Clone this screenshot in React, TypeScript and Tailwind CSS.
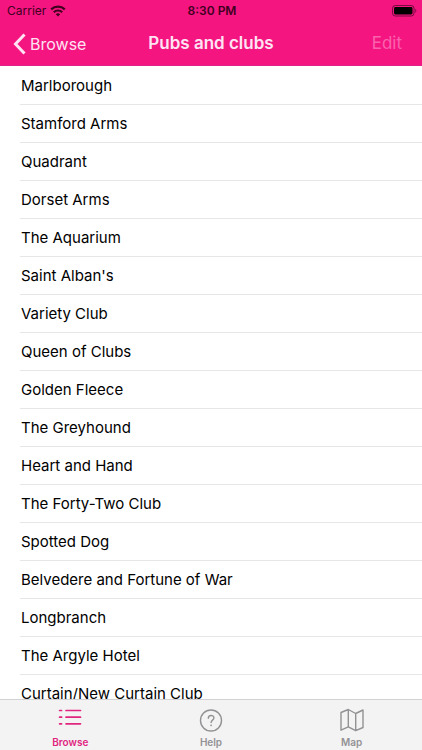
import React, { useState } from 'react';

const VENUES = [
  'Marlborough',
  'Stamford Arms',
  'Quadrant',
  'Dorset Arms',
  'The Aquarium',
  "Saint Alban's",
  'Variety Club',
  'Queen of Clubs',
  'Golden Fleece',
  'The Greyhound',
  'Heart and Hand',
  'The Forty-Two Club',
  'Spotted Dog',
  'Belvedere and Fortune of War',
  'Longbranch',
  'The Argyle Hotel',
  'Curtain/New Curtain Club',
];

const WifiIcon = () => (
  <svg viewBox="0 0 16 12" className="w-4 h-3" fill="none" stroke="currentColor" strokeWidth="2.2" aria-hidden="true">
    <path d="M1.200 4.400a9.800 9.800 0 0 1 13.600 0" />
    <path d="M3.800 7.200a6 6 0 0 1 8.400 0" />
    <path d="M8 11.600 5.800 9.300a3.200 3.200 0 0 1 4.400 0z" fill="currentColor" stroke="none" />
  </svg>
);

const BatteryIcon = () => (
  <svg viewBox="0 0 25 12" className="w-[25px] h-3" aria-hidden="true">
    <rect x="0.5" y="0.5" width="21.5" height="10.5" rx="2.8" fill="none" stroke="#000" strokeOpacity="0.5" />
    <rect x="2" y="2" width="18.5" height="7.5" rx="1.4" fill="#000" />
    <path d="M23.3 3.8v4c1.4-.5 1.4-3.500 0-4z" fill="#000" fillOpacity="0.5" />
  </svg>
);

const ListIcon = () => (
  <svg viewBox="0 0 24 24" className="w-6 h-6" fill="none" stroke="currentColor" strokeWidth="1.7" strokeLinecap="round" aria-hidden="true">
    <path d="M1.600 2.500h2M8 2.500h14.500M1.600 9.200h2M8 9.200h14.500M1.600 15.800h2M8 15.800h14.500" />
  </svg>
);

const HelpIcon = () => (
  <svg viewBox="0 0 24 24" className="w-6 h-6" fill="none" stroke="currentColor" strokeWidth="1.4" strokeLinecap="round" aria-hidden="true">
    <circle cx="12" cy="12.500" r="10.500" />
    <path d="M9.300 10.200c0-3.700 5.600-3.600 5.600-.2 0 2.100-2.800 2.200-2.800 4.500" />
    <circle cx="12.100" cy="17.300" r="0.900" fill="currentColor" stroke="none" />
  </svg>
);

const MapIcon = () => (
  <svg viewBox="0 0 24 24" className="w-6 h-6" fill="none" stroke="currentColor" strokeWidth="1.4" strokeLinejoin="round" aria-hidden="true">
    <path d="M1 4.500 8.300 1.500l7.400 4L23 2v17.500l-7.300 3.200-7.400-3.900L1 22.200zM8.300 1.500v17.300M15.700 5.500v17.200" />
  </svg>
);

const TABS = [
  { id: 'browse', label: 'Browse', Icon: ListIcon },
  { id: 'help', label: 'Help', Icon: HelpIcon },
  { id: 'map', label: 'Map', Icon: MapIcon },
];

export const App: React.FC = () => {
  const [activeTab, setActiveTab] = useState('browse');

  return (
    <div className="flex h-screen flex-col bg-white font-['Inter',sans-serif] text-black">
      <header className="shrink-0 border-b border-[#e0218a] bg-[#f41581]">
        <div className="grid h-[22px] grid-cols-3 items-center pl-[7px] pr-[5px] text-[#40001e]">
          <div className="flex items-center gap-1 text-xs">
            Carrier
            <WifiIcon />
          </div>
          <div className="text-center text-xs font-semibold">8:30 PM</div>
          <div className="flex justify-end">
            <BatteryIcon />
          </div>
        </div>
        <nav className="grid h-[43px] grid-cols-[1fr_auto_1fr] items-center pl-3 pr-5 text-[17px]">
          <button type="button" className="flex items-center gap-1 text-base text-[#ffe3f3]">
            <svg viewBox="0 0 14 22" className="h-[22px] w-[14px]" fill="none" stroke="currentColor" strokeWidth="3" aria-hidden="true">
              <path d="M12.500 1.500 3.500 11l9 9.500" />
            </svg>
            Browse
          </button>
          <h1 className="pl-2 font-semibold text-[#ffe3f3]">Pubs and clubs</h1>
          <button type="button" disabled className="justify-self-end text-[#fb62ad]">
            Edit
          </button>
        </nav>
      </header>

      <main className="min-h-0 flex-1 overflow-hidden">
        <ul className="pl-5 pt-px text-[15px]">
          {VENUES.map(venue => (
            <li key={venue} className="flex h-[38px] items-center border-b border-[#e6e6e8] pl-px pt-0.5">
              {venue}
            </li>
          ))}
        </ul>
      </main>

      <nav className="grid h-[51px] shrink-0 grid-cols-3 border-t border-[#d2d2d4] bg-[#f4f3f4]">
        {TABS.map(({ id, label, Icon }) => (
          <button
            key={id}
            type="button"
            onClick={() => setActiveTab(id)}
            className={`flex flex-col items-center gap-1 pt-2 text-[10px] leading-3 font-semibold ${
              activeTab === id ? 'text-[#e0267f]' : 'text-[#929294]'
            }`}
          >
            <Icon />
            {label}
          </button>
        ))}
      </nav>
    </div>
  );
};

export default App;
